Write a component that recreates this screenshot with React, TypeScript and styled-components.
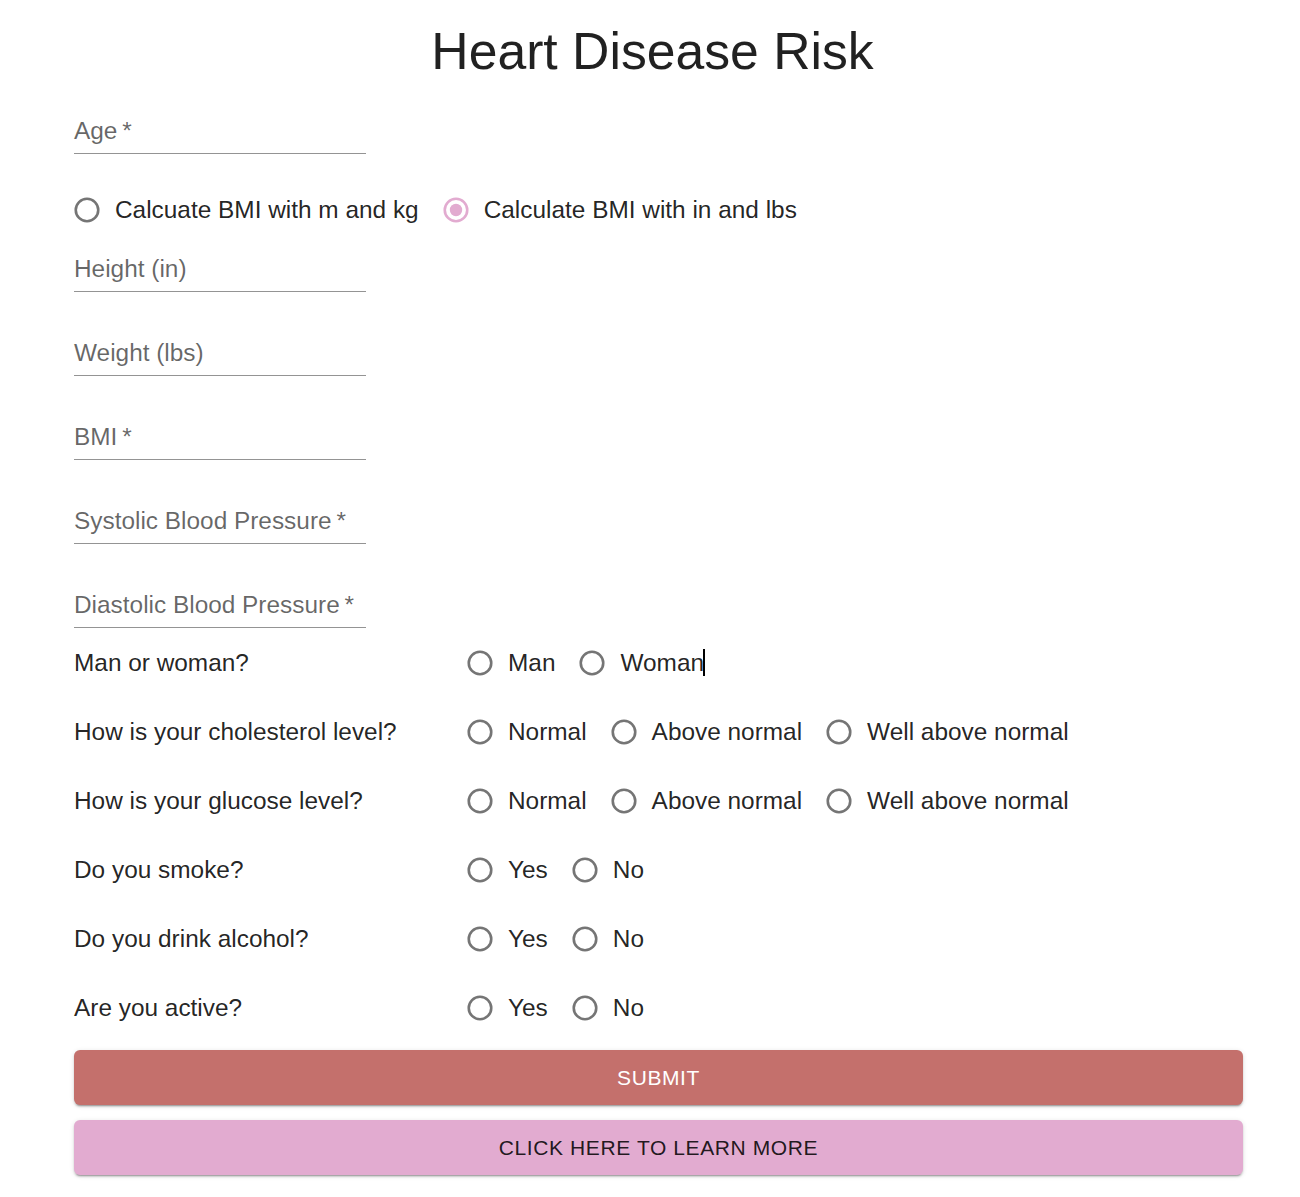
import React from "react";
import styled, { createGlobalStyle } from "styled-components";

const GlobalStyle = createGlobalStyle`
  html, body { margin: 0; padding: 0; background: #ffffff; }
  body { font-family: "Liberation Sans", Arial, sans-serif; color: rgba(0,0,0,0.87); }
  * { box-sizing: border-box; }
`;

const PINK = "#e2abd0";
const RED = "#c4706c";

const Page = styled.div`
  width: 1300px;
  min-height: 1197px;
  display: flex;
  flex-direction: column;
`;

const Title = styled.h1`
  margin: 0;
  padding: 21px 0 0 5px;
  font-size: 51.7px;
  line-height: 60px;
  font-weight: 400;
  text-align: center;
  color: rgba(0, 0, 0, 0.87);
`;

const Form = styled.form`
  display: flex;
  flex-direction: column;
  padding: 0 57px 0 74px;
`;

const FieldBox = styled.div<{ $top: number }>`
  width: 292px;
  margin-top: ${(p) => p.$top}px;
  padding-bottom: 4px;
  border-bottom: 1px solid #949494;
`;

const FieldLabel = styled.label`
  display: block;
  font-size: 24.4px;
  line-height: 36px;
  color: rgba(0, 0, 0, 0.6);
`;

const FieldStack = styled.div`
  display: flex;
  flex-direction: column;
  gap: 43px;
  margin-top: 17px;
`;

const RadioRow = styled.div<{ $top?: number }>`
  display: flex;
  align-items: center;
  gap: 24px;
  height: 48px;
  margin-top: ${(p) => p.$top ?? 0}px;
`;

const Option = styled.label`
  display: flex;
  align-items: center;
  gap: 15px;
  font-size: 24.4px;
  line-height: 36px;
  color: rgba(0, 0, 0, 0.87);
  white-space: nowrap;
  cursor: pointer;
`;

const Caret = styled.span`
  display: inline-block;
  width: 2px;
  height: 27px;
  margin-left: -1px;
  background: #000;
  vertical-align: -5px;
`;

const QuestionGrid = styled.div`
  display: grid;
  grid-template-columns: 393px 1fr;
  grid-auto-rows: 48px;
  row-gap: 21px;
  margin-top: 11px;
`;

const Question = styled.div`
  display: flex;
  align-items: center;
  font-size: 24.4px;
  line-height: 36px;
  color: rgba(0, 0, 0, 0.87);
`;

const Buttons = styled.div`
  display: flex;
  flex-direction: column;
  gap: 15px;
  margin-top: 18px;
`;

const Button = styled.button<{ $variant: "submit" | "learn" }>`
  height: 55px;
  width: 100%;
  border: none;
  border-radius: 6px;
  font-family: "Liberation Sans", Arial, sans-serif;
  font-size: 21px;
  letter-spacing: 0.6px;
  text-transform: uppercase;
  background: ${(p) => (p.$variant === "submit" ? RED : PINK)};
  color: ${(p) => (p.$variant === "submit" ? "#ffffff" : "rgba(0,0,0,0.87)")};
  box-shadow: 0px 3px 1px -2px rgba(0, 0, 0, 0.2), 0px 2px 2px 0px rgba(0, 0, 0, 0.14),
    0px 1px 5px 0px rgba(0, 0, 0, 0.12);
  cursor: pointer;
`;

const RadioIcon: React.FC<{ checked?: boolean }> = ({ checked }) => (
  <svg width="26" height="26" viewBox="0 0 26 26" aria-hidden="true">
    <circle
      cx="13"
      cy="13"
      r="11.25"
      fill="none"
      stroke={checked ? PINK : "#757575"}
      strokeWidth="2.6"
    />
    {checked && <circle cx="13" cy="13" r="6.2" fill={PINK} />}
  </svg>
);

const Radio: React.FC<{ label: React.ReactNode; checked?: boolean }> = ({ label, checked }) => (
  <Option>
    <RadioIcon checked={checked} />
    <span>{label}</span>
  </Option>
);

const fields = [
  "Height (in)",
  "Weight (lbs)",
  "BMI\u2009*",
  "Systolic Blood Pressure\u2009*",
  "Diastolic Blood Pressure\u2009*",
];

const levels = ["Normal", "Above normal", "Well above normal"];
const yesNo = ["Yes", "No"];

const questions: { q: string; opts: string[] }[] = [
  { q: "How is your cholesterol level?", opts: levels },
  { q: "How is your glucose level?", opts: levels },
  { q: "Do you smoke?", opts: yesNo },
  { q: "Do you drink alcohol?", opts: yesNo },
  { q: "Are you active?", opts: yesNo },
];

export default function App() {
  return (
    <Page>
      <GlobalStyle />
      <Title>Heart Disease Risk</Title>
      <Form onSubmit={(e) => e.preventDefault()}>
        <FieldBox $top={32}>
          <FieldLabel>Age{"\u2009"}*</FieldLabel>
        </FieldBox>
        <RadioRow $top={32}>
          <Radio label="Calcuate BMI with m and kg" />
          <Radio label="Calculate BMI with in and lbs" checked />
        </RadioRow>
        <FieldStack>
          {fields.map((f) => (
            <FieldBox key={f} $top={0}>
              <FieldLabel>{f}</FieldLabel>
            </FieldBox>
          ))}
        </FieldStack>
        <QuestionGrid>
          <Question>Man or woman?</Question>
          <RadioRow>
            <Radio label="Man" />
            <Radio
              label={
                <>
                  Woman
                  <Caret />
                </>
              }
            />
          </RadioRow>
          {questions.map((item) => (
            <React.Fragment key={item.q}>
              <Question>{item.q}</Question>
              <RadioRow>
                {item.opts.map((o) => (
                  <Radio key={o} label={o} />
                ))}
              </RadioRow>
            </React.Fragment>
          ))}
        </QuestionGrid>
        <Buttons>
          <Button type="submit" $variant="submit">Submit</Button>
          <Button type="button" $variant="learn">Click here to learn more</Button>
        </Buttons>
      </Form>
    </Page>
  );
}
